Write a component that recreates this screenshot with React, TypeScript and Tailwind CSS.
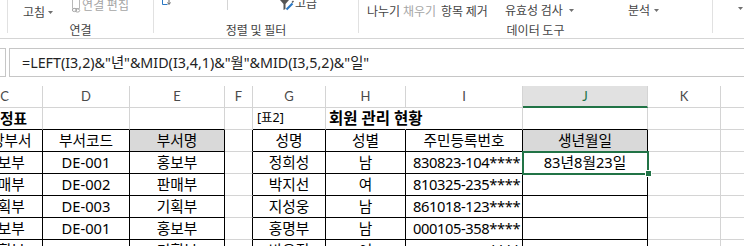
import React from 'react';

const COLS = ['C', 'D', 'E', 'F', 'G', 'H', 'I', 'J', 'K', 'L'];

const ROWS: string[][] = [
  ['정표', '', '', '', '[표2]', '회원 관리 현황', '', '', '', ''],
  ['담당부서', '부서코드', '부서명', '', '성명', '성별', '주민등록번호', '생년월일', '', ''],
  ['홍보부', 'DE-001', '홍보부', '', '정희성', '남', '830823-104****', '83년8월23일', '', ''],
  ['판매부', 'DE-002', '판매부', '', '박지선', '여', '810325-235****', '', '', ''],
  ['기획부', 'DE-003', '기획부', '', '지성웅', '남', '861018-123****', '', '', ''],
  ['홍보부', 'DE-001', '홍보부', '', '홍명부', '남', '000105-358****', '', '', ''],
  ['기획부', 'DE-003', '기획부', '', '박은정', '여', '950312-245****', '', '', ''],
];

function Caret() {
  return (
    <svg width="5" height="3" viewBox="0 0 5 3">
      <path d="M0 0h5L2.5 3z" fill="#707070" />
    </svg>
  );
}

function Sep() {
  return <div className="w-px h-[33px] bg-[#e1e1e1]" />;
}

function Ribbon() {
  return (
    <div className="flex h-[39px] border-b border-[#d5d5d5] overflow-hidden text-[12px] leading-[16px] text-[#444] font-['Noto_Sans_CJK_KR',sans-serif]">
      <div className="w-[7px]" />
      <Sep />

      {/* 연결 */}
      <div className="w-[145px] flex flex-col">
        <div className="h-[22px] flex items-start">
          <div className="ml-[15px] mt-[4px] flex items-center gap-[3px]">
            <span>고침</span>
            <Caret />
          </div>
          <div className="ml-[18px] -mt-[3px] flex items-start">
            <svg width="10" height="15" viewBox="0 0 10 15" className="mt-[1px]">
              <path d="M1.5 0.5v10h7v-10" fill="none" stroke="#b9b9b9" />
              <ellipse cx="3.5" cy="12" rx="2.2" ry="1.6" fill="none" stroke="#a9a9a9" />
              <ellipse cx="6.5" cy="12.5" rx="2.2" ry="1.6" fill="none" stroke="#a9a9a9" />
            </svg>
            <span className="ml-[1px] text-[#a6a6a6]">연결 편집</span>
          </div>
        </div>
        <div className="text-center">연결</div>
      </div>
      <Sep />

      {/* 정렬 및 필터 */}
      <div className="w-[204px] flex flex-col">
        <div className="h-[22px] flex items-start">
          <svg width="9" height="6" viewBox="0 0 9 6" className="ml-[8px]">
            <path d="M0.5 0v4.5h5" fill="none" stroke="#2b78c4" />
            <path d="M7 0v4M5.5 2.5L7 4.5 8.5 2.5" fill="none" stroke="#666" />
          </svg>
          <div className="ml-[56px] w-px h-[10px] bg-[#d5d5d5]" />
          <svg width="14" height="11" viewBox="0 0 14 11" className="ml-[52px]">
            <path d="M0 0h9L5.5 4v5L3.5 10V4z" fill="#555" />
            <path d="M6.5 9.5L12.5 3.5" stroke="#2b78c4" strokeWidth="2.2" />
            <path d="M12 2.5l1.5-1.5" stroke="#555" strokeWidth="1.5" />
          </svg>
          <span className="ml-[1px] -mt-[5px]">고급</span>
        </div>
        <div className="text-center">정렬 및 필터</div>
      </div>
      <Sep />

      {/* 데이터 도구 */}
      <div className="w-[353px] flex flex-col">
        <div className="h-[22px] flex items-start">
          <div className="ml-[8px] w-[36px] mt-[3px]">나누기</div>
          <div className="w-[38px] mt-[3px] text-[#a6a6a6]">채우기</div>
          <div className="w-[64px] mt-[3px]">항목 제거</div>
          <div className="w-[123px] mt-[2px] flex items-center gap-[6px]">
            <span>유효성 검사</span>
            <Caret />
          </div>
          <div className="mt-[2px] flex items-center gap-[4px]">
            <span>분석</span>
            <Caret />
          </div>
        </div>
        <div className="text-center">데이터 도구</div>
      </div>
      <Sep />

      <div className="flex-1 flex items-start">
        <div className="ml-[25px] mt-[7px] flex">
          <Caret />
        </div>
      </div>
    </div>
  );
}

function FormulaBar() {
  return (
    <div className="flex h-[29px]">
      <div className="w-[6px] border-y border-r border-[#c6c6c6]" />
      <div className="w-[3px]" />
      <div className="flex-1 flex items-center pl-[12px] border-y border-l border-[#c6c6c6] text-[14.3px] text-[#222] whitespace-nowrap">
        {'=LEFT(I3,2)&"년"&MID(I3,4,1)&"월"&MID(I3,5,2)&"일"'}
      </div>
    </div>
  );
}

function cellClass(r: number, c: number) {
  const inTable = c <= 2 || (c >= 4 && c <= 7);
  const rightBlack = r >= 2 && c <= 7;
  const right = rightBlack ? 'border-r-black' : r === 1 && c === 5 ? 'border-r-white' : 'border-r-[#d4d4d4]';
  const bottom = inTable ? 'border-b-black' : 'border-b-[#d4d4d4]';
  const fill = r === 2 && (c === 2 || c === 7) ? 'bg-[#d9d9d9]' : '';
  let align = 'justify-center';
  if (r >= 3 && c === 6) align = 'justify-start pl-[7px] tracking-[-0.4px]';
  if (r === 1 && c === 0) align = 'justify-start pl-[33px] font-bold';
  if (r === 1 && c === 4) align = 'justify-start pl-[4px] text-[12.5px]';
  if (r === 1 && c === 5) align = 'justify-start pl-[3px] font-bold text-[15.5px]';
  return `h-[22px] border-r border-b flex items-center whitespace-nowrap ${right} ${bottom} ${fill} ${align}`;
}

function Sheet() {
  return (
    <div className="ml-[-33px] grid grid-cols-[76px_87px_95px_28px_73px_80px_117px_125px_73px_73px] text-[14.7px] leading-none text-black">
      {COLS.map((k) =>
        k === 'J' ? (
          <div
            key={k}
            className="h-[22px] flex items-center justify-center border-r border-r-[#d4d4d4] border-b-2 border-b-[#217346] bg-[#e1e1e1] text-[#217346] font-['Lato',sans-serif] text-[13px]"
          >
            {k}
          </div>
        ) : (
          <div
            key={k}
            className="h-[22px] flex items-center justify-center border-r border-b border-[#d4d4d4] text-[#4a4a4a] font-['Lato',sans-serif] text-[13px]"
          >
            {k}
          </div>
        )
      )}
      {ROWS.map((row, i) =>
        row.map((v, c) => {
          const r = i + 1;
          const selected = r === 3 && c === 7;
          return (
            <div key={`${r}-${c}`} className={`${cellClass(r, c)} ${selected ? 'relative' : ''}`}>
              {v}
              {selected && (
                <>
                  <div className="absolute left-[-1px] top-[-1px] right-[-2px] bottom-[-2px] border-2 border-[#217346] z-10" />
                  <div className="absolute right-[-5px] bottom-[-4px] w-[7px] h-[7px] bg-[#217346] border border-white z-20" />
                </>
              )}
            </div>
          );
        })
      )}
    </div>
  );
}

export default function App() {
  return (
    <div className="w-[744px] h-[246px] overflow-hidden bg-white font-['Noto_Sans','Noto_Sans_CJK_KR',sans-serif]">
      <Ribbon />
      <div className="h-[9px]" />
      <FormulaBar />
      <div className="h-[9px]" />
      <Sheet />
    </div>
  );
}
